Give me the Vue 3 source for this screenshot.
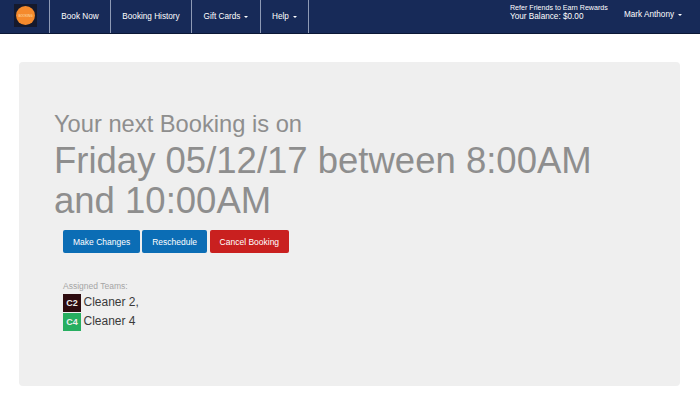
<script setup>
const links = [
  { label: "Book Now", width: 61 },
  { label: "Booking History", width: 81 },
  { label: "Gift Cards", width: 69, caret: true },
  { label: "Help", width: 49, caret: true },
];
const teams = [
  { code: "C2", name: "Cleaner 2,", color: "#2e0c10" },
  { code: "C4", name: "Cleaner 4", color: "#27ae60" },
];
</script>

<template>
  <nav class="navbar">
    <div class="brand">
      <div class="logo-box">
        <div class="logo"><span>BOOKING</span></div>
      </div>
    </div>
    <ul class="nav-links">
      <li v-for="link in links" :key="link.label" :style="{ width: link.width + 'px' }">
        {{ link.label }}<span v-if="link.caret" class="caret"></span>
      </li>
    </ul>
    <div class="nav-right">
      <div class="balance">
        <div class="refer">Refer Friends to Earn Rewards</div>
        <div class="amount">Your Balance: $0.00</div>
      </div>
      <div class="user">Mark Anthony<span class="caret"></span></div>
    </div>
  </nav>

  <main class="page">
    <section class="jumbotron">
      <p class="lead">Your next Booking is on</p>
      <h1>Friday 05/12/17 between 8:00AM and 10:00AM</h1>
      <div class="actions">
        <button class="btn blue">Make Changes</button>
        <button class="btn blue">Reschedule</button>
        <button class="btn red">Cancel Booking</button>
      </div>
      <div class="teams">
        <div class="teams-title">Assigned Teams:</div>
        <div v-for="team in teams" :key="team.code" class="team">
          <span class="badge" :style="{ background: team.color }">{{ team.code }}</span>
          <span class="team-name">{{ team.name }}</span>
        </div>
      </div>
    </section>
  </main>
</template>

<style>
html,
body {
  margin: 0;
  background: #fff;
}
</style>

<style scoped>
* {
  box-sizing: border-box;
  font-family: "Liberation Sans", Arial, sans-serif;
}

.navbar {
  height: 34px;
  background: #172a58;
  border-bottom: 1px solid #0b1836;
  display: flex;
  color: #fff;
}

.brand {
  width: 49px;
  padding: 4px 0 0 14px;
}

.logo-box {
  width: 23px;
  height: 23px;
  background: #15192c;
  display: flex;
  align-items: center;
  justify-content: center;
}

.logo {
  width: 19px;
  height: 19px;
  border-radius: 50%;
  background: #f58a2c;
  display: flex;
  align-items: center;
  justify-content: center;
  overflow: hidden;
}

.logo span {
  font-size: 3px;
  color: #fde0b8;
}

.nav-links {
  display: flex;
  list-style: none;
  margin: 0;
  padding: 0;
}

.nav-links li {
  border-left: 1px solid #8e9ab5;
  font-size: 8.2px;
  line-height: 33px;
  text-align: center;
  white-space: nowrap;
}

.nav-links li:last-child {
  border-right: 1px solid #8e9ab5;
}

.caret {
  display: inline-block;
  margin-left: 4px;
  vertical-align: middle;
  border-top: 2px solid #fff;
  border-left: 2px solid transparent;
  border-right: 2px solid transparent;
}

.nav-right {
  margin-left: auto;
  display: flex;
}

.balance {
  width: 114px;
  padding-top: 4px;
}

.refer {
  font-size: 7.1px;
  line-height: 8px;
}

.amount {
  font-size: 8.2px;
  line-height: 10px;
}

.user {
  width: 76px;
  font-size: 8.2px;
  line-height: 29px;
}

.page {
  padding: 28px 20px 0 19px;
}

.jumbotron {
  height: 324px;
  background: #efefef;
  border-radius: 4px;
  padding: 49px 35px 0 35px;
}

.lead {
  margin: 0;
  font-size: 23.7px;
  line-height: 27px;
  color: #8e8e8e;
}

h1 {
  margin: 3px 0 0;
  font-size: 36.5px;
  font-weight: 400;
  line-height: 40px;
  color: #8e8e8e;
}

.actions {
  display: flex;
  gap: 2px;
  margin: 9px 0 0 9px;
}

.btn {
  height: 23px;
  border: 1px solid transparent;
  border-radius: 2px;
  padding: 0 9px;
  font-size: 8.5px;
  color: #fff;
}

.blue {
  background: #0b6db5;
}

.red {
  background: #c9201f;
  margin-left: 1px;
  padding: 0 8.5px;
}

.teams {
  margin: 25px 0 0 9px;
}

.teams-title {
  font-size: 8.5px;
  line-height: 16px;
  color: #a5a5a5;
}

.team {
  display: flex;
  align-items: center;
  gap: 2.5px;
  height: 18.5px;
  font-size: 12px;
  color: #3a3a3a;
}

.team-name {
  padding-bottom: 2px;
}

.badge {
  width: 18px;
  height: 18px;
  display: flex;
  align-items: center;
  justify-content: center;
  font-size: 9px;
  font-weight: 700;
  color: #eee;
}
</style>
